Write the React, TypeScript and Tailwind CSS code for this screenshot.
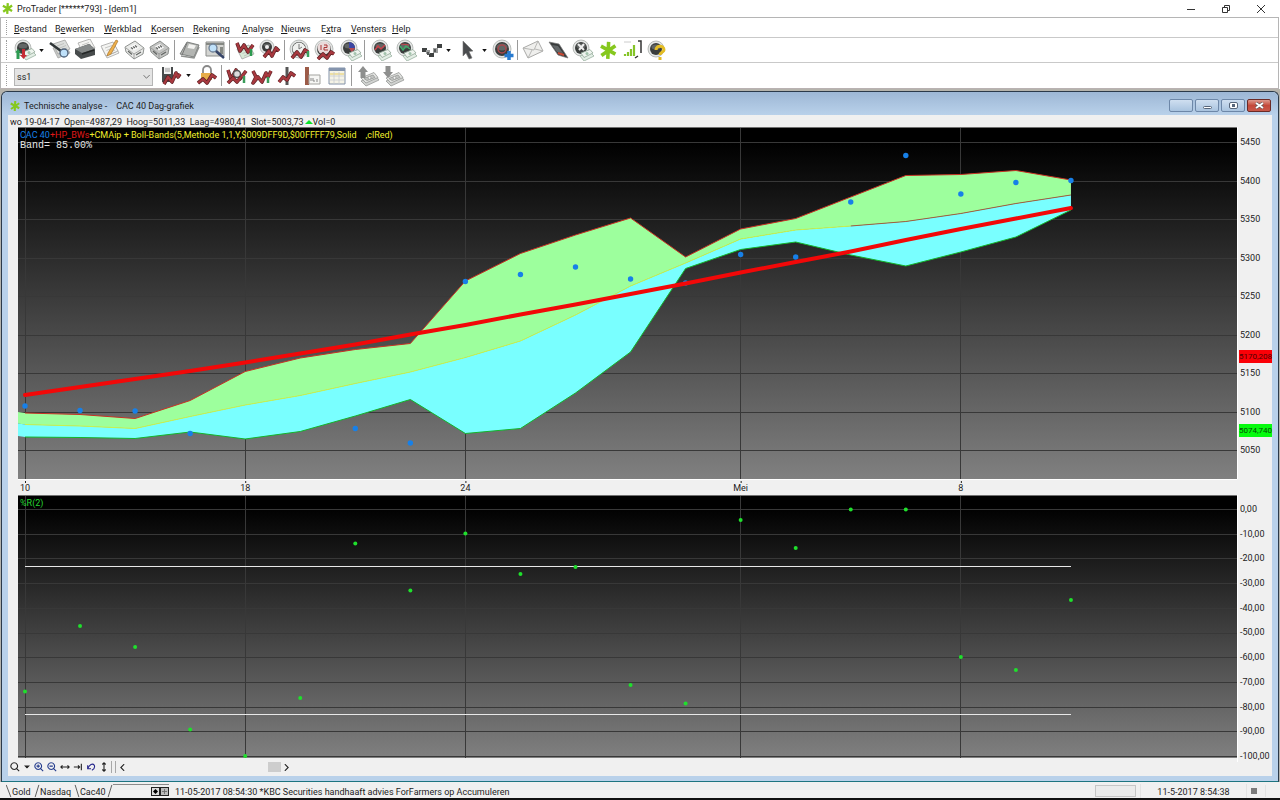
import { type ReactNode } from "react"

const STEP = 55.05
const px = (i: number) => 7 + STEP * i

const upper = [285, 286.5, 290.5, 272.5, 243.5, 230, 221.5, 215.5, 153, 125.5, 107, 90, 129, 101, 90.5, 69, 47.5, 46.5, 42.5, 52]
const middle = [296.5, 298, 300.5, 288.5, 277, 267.5, 255.5, 244, 229.5, 213, 187, 158, 135, 111, 102, 98, 93.5, 85.5, 75.5, 67]
const lower = [309, 309.5, 310.5, 304, 311, 303.5, 288, 271.5, 305.5, 300.5, 265, 224, 140.5, 121.5, 114, 127, 138, 124, 109, 82]
const average = [267, 259, 251, 243, 234.5, 225.5, 216.5, 206.5, 197, 186.5, 176.5, 166, 155.5, 144.5, 134, 123.5, 112, 101, 90.5, 80]
const closes = [278, 282.5, 283, 305.5, null, null, 300.5, 315, 153.5, 146.5, 139, 151, 155, 126.5, 129, 74, 27.5, 66, 54.5, 52.5]
const percentR = [195.5, 130, 151, 233.5, 260, 202, 47.5, 94.5, 37.5, 78, 71, 189, 207.5, 24, 52, 13.5, 13.5, 161, 174, 104]

const days = [
  { i: 0, label: "10" },
  { i: 4, label: "18" },
  { i: 8, label: "24" },
  { i: 13, label: "Mei" },
  { i: 17, label: "8" },
]

const priceScale = ["5450", "5400", "5350", "5300", "5250", "5200", "5150", "5100", "5050"]
const rScale = ["0,00", "-10,00", "-20,00", "-30,00", "-40,00", "-50,00", "-60,00", "-70,00", "-80,00", "-90,00", "-100,00"]

const line = (ys: number[], from = 0) => ys.map((y, i) => `${px(i + from)},${y}`).join(" ")
const area = (top: number[], bottom: number[]) =>
  `0,${top[0] - 1} ${line(top)} ${line(bottom).split(" ").reverse().join(" ")} 0,${bottom[0] - 1}`

const menu: [string, string, string][] = [
  ["", "B", "estand"],
  ["B", "e", "werken"],
  ["", "W", "erkblad"],
  ["", "K", "oersen"],
  ["", "R", "ekening"],
  ["", "A", "nalyse"],
  ["", "N", "ieuws"],
  ["E", "x", "tra"],
  ["", "V", "ensters"],
  ["", "H", "elp"],
]
const menuWidths = ["w-[41px]", "w-[49px]", "w-[47px]", "w-[42px]", "w-[49px]", "w-[39px]", "w-[40px]", "w-[30px]", "w-[41px]", "w-[32px]"]

// ---- icon parts, all drawn on a 24 x 22 board

const Knob = ({ x = 11, y = 10, r = 8 }) => (
  <g>
    <circle cx={x} cy={y} r={r} fill="#e4e6e5" stroke="#a9adab" strokeWidth=".8" />
    <circle cx={x} cy={y} r={r - 2} fill="#3a3d3c" />
    <ellipse cx={x} cy={y - 2} rx={r - 3.5} ry={r - 5.5} fill="#626665" />
  </g>
)
const Zig = ({ d = "M3 18L7 10L11 16L15 6L18 12L21 8" }) => (
  <g fill="none" strokeLinejoin="round">
    <path d={d} stroke="#5e2226" strokeWidth="3.6" />
    <path d={d} stroke="#a8393f" strokeWidth="2.2" />
  </g>
)
const Sheet = ({ x = 0, y = 0, fill = "#f4f4f2" }) => (
  <g transform={`translate(${x} ${y})`}>
    <path d="M2 6L14 2L19 11L7 16Z" fill={fill} stroke="#a5a5a3" strokeWidth=".8" />
    <path d="M6 8L13 5.500M7.500 10.500L15 7.500M9 13L16 10" stroke="#b9bab8" strokeWidth=".8" />
  </g>
)
const Bills = ({ x = 0, y = 0 }) => (
  <g transform={`translate(${x} ${y})`}>
    <path d="M8 15L18 11L22 15L12 20Z" fill="#e3eee5" stroke="#9bb3a1" strokeWidth=".8" />
    <path d="M9 12L18 8.500L21 12L12 16.500Z" fill="#eef4ee" stroke="#8fa696" strokeWidth=".8" />
    <circle cx="15" cy="12.500" r="1.500" fill="#a2c4ac" />
  </g>
)
const Calc = ({ fill }: { fill: string }) => (
  <g>
    <path d="M2 8L12 2L21 9L20 15L11 20L3 13Z" fill={fill} stroke="#858886" strokeWidth=".9" />
    <path d="M3 9L11 15L20 9.500M11 15V20" fill="none" stroke="#8f918f" strokeWidth=".8" />
    <path d="M7 7.500L12 5L16 8.500L11 11.500Z" fill="#fafafa" />
    <path d="M8 8.500L10 10M10 7.500L12 9M12 6.500L14 8.300M5 12L9 15.500M13 16L18 13" stroke="#616462" strokeWidth="1.200" />
  </g>
)
const Star = () => (
  <path
    d="M12.500 1L11.500 21M3.500 6L20.500 15.500M20.500 5.500L4 17"
    stroke="#86c81e"
    strokeWidth="4.200"
    fill="none"
  />
)
const Lens = ({ x = 14, y = 13 }) => (
  <g>
    <path d={`M${x + 3} ${y + 3}L${x + 7} ${y + 7}`} stroke="#303c55" strokeWidth="2.200" />
    <circle cx={x} cy={y} r="4" fill="#bfe1fa" stroke="#6d7f95" strokeWidth="1.300" />
  </g>
)
const GreyBills = () => (
  <g stroke="#979997" strokeWidth=".8">
    <path d="M5 16L19 10L23 15L10 21Z" fill="#d0d2d0" />
    <path d="M5 13L18 7.500L22 12.500L10 18Z" fill="#e2e3e1" />
    <path d="M8 13.500L17 10L19 12.500L11 15.500Z" fill="#c3c5c3" />
    <circle cx="13.500" cy="12.800" r="1.500" fill="#f2f2f2" />
  </g>
)

function Tool({ name, children }: { name: string; children: ReactNode }) {
  return (
    <button aria-label={name} className="flex w-[25px] shrink-0 items-center justify-center">
      <svg viewBox="0 0 24 22" className="h-[22px] w-[24px]">{children}</svg>
    </button>
  )
}

function Caret({ name }: { name: string }) {
  return (
    <button aria-label={name} className="flex w-[11px] shrink-0 items-center justify-center">
      <svg viewBox="0 0 6 4" className="h-[3px] w-[5px]"><path d="M0 0H6L3 4Z" fill="#111" /></svg>
    </button>
  )
}

const Sep = () => <div className="mx-[2px] my-[2px] w-px shrink-0 bg-[#9a9a9a]" />
const Grip = () => <div className="my-[2px] ml-[5px] w-px shrink-0 border-l border-dotted border-[#9d9d9d]" />

function MainToolbar() {
  return (
    <div className="flex h-[25px] border-b border-[#c9c9c9]">
      <Grip />
      <div className="ml-[4px] flex">
        <Tool name="Order"><Knob x={11} y={9} r={8} /><Bills x={2} y={1} /><path d="M6 10L9 13.500H7.500V20H4.500V13.500H3Z" fill="#2d9c52" /><path d="M10 10H13V16H15L11.500 20L8 16H10Z" fill="#c52c34" /></Tool>
        <Caret name="Order opties" />
        <Tool name="Zoeken"><Sheet x={3} y={3} fill="#c9cbc9" /><Sheet x={3} y={-1} fill="#dcdedc" /><path d="M2 4L13 12" stroke="#303638" strokeWidth="2.500" /><circle cx="16" cy="14" r="4" fill="#bfe1fa" stroke="#4d6078" strokeWidth="1.300" /></Tool>
        <Tool name="Afdrukken"><Sheet x={3} y={-2} /><path d="M2 10L16 5L22 10V16L8 20L2 15Z" fill="#474b4c" /><path d="M2 10L16 5L22 10L9 14Z" fill="#858989" /><path d="M9 15L21 11" stroke="#242727" strokeWidth="1.500" /></Tool>
        <Tool name="Notitie"><Sheet x={2} y={3} /><Sheet x={1} y={1} /><path d="M10 14L18 1L20 2L13 15L9 17Z" fill="#eeb04c" stroke="#a9762d" strokeWidth=".7" /></Tool>
        <Tool name="Calculator"><Calc fill="#e9eae8" /></Tool>
        <Tool name="Portefeuille"><Calc fill="#c4c5c3" /></Tool>
        <Sep />
        <Tool name="Boek"><path d="M2 15L9 3L21 6L16 18Z" fill="#b3b5b2" stroke="#747775" strokeWidth=".9" /><path d="M3 17L16 19L21 8" fill="none" stroke="#8e908e" strokeWidth="1.500" /><path d="M11 5L18 6.500L16 10L9.500 9Z" fill="#f2f2f0" /><path d="M9 4L4 16" stroke="#777" /></Tool>
        <Tool name="Bekijken"><path d="M3 3H21V17H3Z" fill="#d4d5d2" stroke="#8b8d8b" /><path d="M3 4H21V6H3ZM17 8H20V15H17Z" fill="#858883" /><Lens x={10} y={9} /><path d="M13 12L21 19" stroke="#38466a" strokeWidth="2.500" /></Tool>
        <Sep />
        <Tool name="Grafiek"><Sheet x={2} y={4} fill="#d8ead7" /><Zig d="M4 4L7 12L11 6L15 13L20 6" /><path d="M18 17V10" stroke="#2c9a50" strokeWidth="2.500" /></Tool>
        <Tool name="Indicator"><Knob x={9} y={8} r={7} /><circle cx="9" cy="8" r="2" fill="#eee" /><Zig d="M6 18L11 12L14 17L18 9L21 12" /></Tool>
        <Sep />
        <Tool name="Tijd"><Knob x={11} y={10} r={9} /><circle cx="11" cy="10" r="6.500" fill="#f0f1ef" /><path d="M11 5V10L14 8" stroke="#777" fill="none" /><Zig d="M4 19L9 13L13 18L17 11L20 13" /><path d="M20 18V12" stroke="#39a15d" strokeWidth="2.500" /></Tool>
        <Tool name="Dag"><Knob x={11} y={10} r={9} /><circle cx="11" cy="9" r="6.500" fill="#eadada" /><path d="M8 6V11M11 6H14V8.500H11V11H15" stroke="#a33" fill="none" /><Zig d="M5 20L10 15L14 19L18 13L21 15" /></Tool>
        <Tool name="Verdeling"><Knob x={11} y={9} r={8} /><path d="M11 9V3A6 6 0 0 1 17 9Z" fill="#3c47a4" /><path d="M11 9H17L14 14Z" fill="#b54a51" /><Bills x={2} y={2} /></Tool>
        <Sep />
        <div className="ml-px flex">
          <Tool name="Rendement"><Knob x={11} y={9} r={8} /><path d="M6 11L9 7L12 10L16 6" stroke="#c8434a" strokeWidth="1.500" fill="none" /><Bills x={1} y={2} /></Tool>
          <Tool name="Risico"><Knob x={11} y={9} r={8} /><path d="M6 7L9 11L12 7L16 10" stroke="#3fab6a" strokeWidth="1.500" fill="none" /><path d="M7 5L15 6" stroke="#c8434a" /><Bills x={1} y={2} /></Tool>
          <Tool name="Raster">
            <path d="M3 9H8V13H3ZM10 14H15V18H10ZM18 5H23V9H18Z" fill="#3f4242" />
            <path d="M7 11H11V15H7ZM14 9H19V14H14Z" fill="#9a9c9c" />
            <path d="M8 13H10V16H8ZM15 10H17V13H15Z" fill="#555858" />
          </Tool>
          <Caret name="Raster opties" />
          <Tool name="Aanwijzer"><path d="M8 2L18 12L14 12.500L17 19L14 20L11 14L8 17Z" fill="#4a4c4e" stroke="#777" strokeWidth=".6" /></Tool>
          <Caret name="Aanwijzer opties" />
          <Tool name="Toevoegen"><Knob x={11} y={10} r={9} /><circle cx="11" cy="10" r="4" fill="none" stroke="#a9474c" strokeWidth="1.500" /><path d="M18 12V21M13.500 16.500H22.500" stroke="#287bd0" strokeWidth="3.500" /></Tool>
        </div>
        <Sep />
        <Tool name="Bericht"><path d="M2 9L17 2L22 12L7 19Z" fill="#efefed" stroke="#aaaaa8" /><path d="M2 9L13 11L17 2M7 19L11 11M22 12L14 10" stroke="#b1b1af" fill="none" strokeWidth=".9" /></Tool>
        <Tool name="Scherm"><path d="M3 3L13 5L22 19L12 16Z" fill="#393c3d" stroke="#777" strokeWidth=".7" /><path d="M6 6L12 7L17 14L11 13Z" fill="#64686a" /><path d="M12 14L18 16" stroke="#c94934" strokeWidth="2" /></Tool>
        <Tool name="Instellingen"><Knob x={10} y={9} r={8} /><path d="M7 5L13 11M13 5L8 11" stroke="#eee" strokeWidth="2" /><Bills x={1} y={2} /></Tool>
        <Tool name="ProTrader"><g transform="translate(2 2) scale(.85)"><Star /></g></Tool>
        <Tool name="Signaal"><path d="M4 15V17M7 13V17M10 10V17M13 6V17" stroke="#85c428" strokeWidth="2.200" /><path d="M17 2H20V14M14 19L17 17" fill="none" stroke="#333" strokeWidth="1.500" /><path d="M3 3H10" stroke="#ccc" /></Tool>
        <Tool name="Help"><Knob x={10} y={10} r={8} /><path d="M10 11C10 6 18 6 18 11C18 13 14 13 14 16M14 18V21" fill="none" stroke="#e4bd25" strokeWidth="3" /></Tool>
      </div>
    </div>
  )
}

function ChartToolbar() {
  return (
    <div className="flex h-[26px] border-b border-[#b9b2b2]">
      <Grip />
      <div className="relative mt-[5px] ml-[7px] h-[18px] w-[139px]">
        <select aria-label="Werkset" className="h-full w-full appearance-none border border-[#b5b5b5] bg-[#e4e4e4] pl-[2px] text-[9px] leading-[14px]">
          <option>ss1</option>
        </select>
        <svg viewBox="0 0 8 5" className="pointer-events-none absolute top-[7px] right-[3px] h-[4px] w-[7px]"><path d="M0 0L4 4L8 0" fill="none" stroke="#555" /></svg>
      </div>
      <div className="ml-[5px] flex">
        <Tool name="Opslaan"><path d="M3 2H14V17H3Z" fill="#484b4c" /><path d="M5 2H12V9H5Z" fill="#f2f2f2" /><path d="M6 4H11M6 6H11" stroke="#999" /><Zig d="M5 19L9 12L13 17L17 8L19 12L21 9" /></Tool>
        <Caret name="Opslaan opties" />
        <Tool name="Vergrendelen"><path d="M8 8V5A4 4 0 0 1 16 5V8" fill="none" stroke="#888" strokeWidth="1.800" /><path d="M6 8H17V15H6Z" fill="#e7ad49" /><Zig d="M3 18L8 14L12 18L17 10L21 13" /></Tool>
        <Sep />
        <Tool name="Analyse"><Zig d="M3 5L6 14L11 5L15 14L21 6" /><circle cx="12" cy="9" r="3.500" fill="#ddd" stroke="#555" strokeWidth="1.500" /><Zig d="M3 18L8 13L12 17L16 12" /><path d="M19 18V11" stroke="#3a9c5a" strokeWidth="2.500" /></Tool>
        <Tool name="Trend"><Zig d="M3 6L6 12L3 18L8 12L12 17L16 8L18 12L21 6" /><path d="M18 18V12" stroke="#3a9c5a" strokeWidth="2.500" /></Tool>
        <Tool name="Lijn"><path d="M12 2V20" stroke="#555" strokeWidth="3" /><Zig d="M4 17L8 12L12 15L16 8L20 11" /></Tool>
        <Tool name="Label"><path d="M7 2V20" stroke="#9c5b48" strokeWidth="4" /><path d="M9 10H20V19H9Z" fill="#f6f6f4" stroke="#a3a39f" /><path d="M11 16V13M13 13V16H15M17 14V17" stroke="#888" fill="none" /></Tool>
        <Tool name="Tabel"><path d="M4 3H20V19H4Z" fill="#f5f3e6" stroke="#8392a9" /><path d="M4 3H20V6H4Z" fill="#8494ad" /><path d="M5 8H19V10H5Z" fill="#eee0a4" /><path d="M9 7V19M14 7V19M5 11H19M5 15H19" stroke="#c8cbd2" strokeWidth=".8" /></Tool>
        <Sep />
        <div className="ml-px flex">
          <Tool name="Omhoog"><GreyBills /><path d="M7 1L12 7H9.500V13H4.500V7H2Z" fill="#8e8f8e" /></Tool>
          <Tool name="Omlaag"><GreyBills /><path d="M4.500 1H9.500V7H12L7 13L2 7H4.500Z" fill="#8e8f8e" /></Tool>
        </div>
      </div>
    </div>
  )
}

function Plot({ label, height, rows, children }: { label: string; height: number; rows: number[]; children: ReactNode }) {
  return (
    <svg role="img" aria-label={label} viewBox={`0 0 1219 ${height}`} preserveAspectRatio="none" className="block h-full w-full">
      <defs>
        <linearGradient id={`bg${height}`} x1="0" y1="0" x2="0" y2="1">
          <stop offset=".04" stopColor="#000" />
          <stop offset="1" stopColor="#808080" />
        </linearGradient>
      </defs>
      <rect width="1219" height={height} fill={`url(#bg${height})`} />
      <g stroke="#383838" shapeRendering="crispEdges">
        {rows.map((y) => <path key={y} d={`M0 ${y}H1219`} />)}
        {days.map((d) => <path key={d.i} d={`M${px(d.i)} 0V${height}`} />)}
      </g>
      {children}
    </svg>
  )
}

function PriceChart() {
  return (
    <Plot label="CAC 40 koers" height={351} rows={priceScale.map((_, i) => 14.5 + i * 38.5)}>
      <polygon points={area(upper, middle)} fill="#9dff9d" />
      <polygon points={area(middle, lower)} fill="#79ffff" />
      <g fill="none">
        <polyline points={line(upper)} stroke="#c83224" />
        <polyline points={line(lower)} stroke="#12b52a" />
        <polyline points={line(middle.slice(0, 16))} stroke="#ccf24a" />
        <polyline points={line(middle.slice(15), 15)} stroke="#a3603c" />
      </g>
      {closes.map((y, i) => y !== null && <circle key={i} cx={px(i)} cy={y} r="2.700" fill="#1780e8" />)}
      <polyline points={line(average)} fill="none" stroke="#f20808" strokeWidth="4" strokeLinecap="round" />
    </Plot>
  )
}

function PercentChart() {
  return (
    <Plot label="%R(2)" height={262} rows={rScale.map((_, i) => 13.5 + i * 24.7)}>
      <path d={`M7 70.500H${px(19)}M7 218.500H${px(19)}`} stroke="#e8e8e8" shapeRendering="crispEdges" />
      {percentR.map((y, i) => <circle key={i} cx={px(i)} cy={y} r="2" fill="#1fe02c" />)}
    </Plot>
  )
}

function ChildWindow() {
  const caption = "flex h-[13px] w-[24px] items-center justify-center rounded-[2px] border border-[#6d87a8] bg-linear-to-b from-[#cfdff0] to-[#a9c3df]"
  return (
    <section className="rounded-t-md border border-[#2b3a4a] border-b-[#1d7480] bg-[#b9d1ea] px-[6px] pb-[5px]">
      <header className="-mx-[6px] flex h-[23px] items-center rounded-t-md bg-linear-to-b from-[#9db7d5] to-[#b9d1ea] pt-[4px] pr-[7px] pl-[7px]">
        <svg viewBox="0 0 24 22" className="mr-[3px] h-[12px] w-[12px]"><Star /></svg>
        <h1 className="mr-auto whitespace-pre">Technische analyse -    CAC 40 Dag-grafiek</h1>
        <div className="flex gap-[2px]">
          <button aria-label="Venster" className={caption} />
          <button aria-label="Minimaliseren" className={caption}><span className="mt-[3px] h-[3px] w-[9px] rounded-xs border border-[#56657a] bg-white" /></button>
          <button aria-label="Herstellen" className={caption}><span className="flex h-[7px] w-[9px] items-center justify-center rounded-xs border border-[#56657a] bg-white"><span className="h-[3px] w-[3px] bg-[#56657a]" /></span></button>
          <button aria-label="Sluiten" className="flex h-[13px] w-[24px] items-center justify-center rounded-[2px] border border-[#6b2a26] bg-linear-to-b from-[#dd9a8e] via-[#c4493a] to-[#c9594a]">
            <svg viewBox="0 0 9 7" className="h-[7px] w-[9px]"><path d="M1 1L8 6M8 1L1 6" stroke="#555" strokeWidth="3" /><path d="M1 1L8 6M8 1L1 6" stroke="#fff" strokeWidth="2" /></svg>
          </button>
        </div>
      </header>
      <div className="bg-[#f0f0f0] pb-[4px]">
        <p className="flex h-[12px] items-center pt-px pl-[2px] whitespace-pre">
          wo 19-04-17  Open=4987,29  Hoog=5011,33  Laag=4980,41  Slot=5003,73 
          <svg viewBox="0 0 8 4" className="ml-px h-[4px] w-[8px]"><path d="M0 4L4 0L8 4Z" fill="#0be32a" /></svg>
          Vol=0
        </p>
        <div className="flex">
          <div className="relative ml-[10px] h-[352px] min-w-0 flex-1 border-t border-[#707070]">
            <PriceChart />
            <p className="absolute top-px left-[2px] whitespace-pre text-[#f0ee2c]">
              <span className="text-[#1780e8]">CAC 40</span><span className="text-[#e01818]">+HP_BWs</span>+CMAip + Boll-Bands(5,Methode 1,1,Y,$009DFF9D,$00FFFF79,Solid    ,clRed)
            </p>
            <p className="absolute top-[12px] left-[2px] font-['Liberation_Mono',monospace] text-[10px] whitespace-pre text-[#e6e6e6]">Band= 85.00%</p>
          </div>
          <div className="relative flex w-[35px] shrink-0 flex-col justify-between border-l border-white pt-[9px] pb-[23px] pl-[2px]">
            {priceScale.map((p) => <span key={p}>{p}</span>)}
            <span className="absolute top-[223px] left-px h-[13px] w-[33px] bg-[#fb0007] text-[8px] leading-[14px] text-[#4d0003]">5170,208</span>
            <span className="absolute top-[297px] left-px h-[13px] w-[33px] bg-[#06fb0e] text-[8px] leading-[14px] text-[#034d05]">5074,740</span>
          </div>
        </div>
        <div className="mr-[35px] ml-[10px] border-t border-white">
          <svg className="block h-[15px] w-full">
            {days.map((d) => (
              <g key={d.i}>
                <rect x={`${(px(d.i) / 1219) * 100}%`} y="1" width="1" height="2" fill="#222" />
                <text x={`${(px(d.i) / 1219) * 100}%`} y="11" textAnchor="middle" fill="#222">{d.label}</text>
              </g>
            ))}
          </svg>
        </div>
        <div className="flex items-start">
          <div className="relative ml-[10px] h-[263px] min-w-0 flex-1 border-t border-[#707070]">
            <PercentChart />
            <p className="absolute top-px left-[2px] text-[#25d532]">%R(2)</p>
          </div>
          <div className="flex h-[267px] w-[35px] shrink-0 flex-col justify-between border-l border-white pt-[8px] pl-[2px]">
            {rScale.map((p) => <span key={p}>{p}</span>)}
          </div>
        </div>
        <ChartFooter />
      </div>
    </section>
  )
}

function ChartFooter() {
  return (
    <div className="flex h-[10px] items-center">
      {[
        ["Zoom", "M8 8L11 11M5 1A4 4 0 1 0 5.100 1", "#222"],
        ["Meer", "M4 5H8L6 7Z", "#222"],
        ["Inzoomen", "M8 8L11 11M5 1A4 4 0 1 0 5.100 1M3 5H7M5 3V7", "#223a8c"],
        ["Uitzoomen", "M8 8L11 11M5 1A4 4 0 1 0 5.100 1M3 5H7", "#223a8c"],
        ["Breedte", "M1 6H11M3 4L1 6L3 8M9 4L11 6L9 8", "#222"],
        ["Einde", "M1 6H8M6 4L8 6L6 8M10 2V10", "#222"],
        ["Terug", "M2 4V8H6M2 8C4 3 8 1 10 4C11 7 9 9 7 10", "#25258c"],
        ["Hoogte", "M6 1V11M4 3L6 1L8 3M4 9L6 11L8 9", "#222"],
      ].map(([name, d, color]) => (
        <button key={name} aria-label={name} className={`flex h-[10px] items-center justify-center ${name === "Meer" ? "w-[11px]" : "w-[13px]"}`}>
          <svg viewBox="0 0 12 12" className="h-[10px] w-[10px]"><path d={d} fill={name === "Meer" ? color : "none"} stroke={color} strokeWidth="1.300" /></svg>
        </button>
      ))}
      <div className="ml-px h-[12px] w-[5px] border-x border-[#a8a8a8]" />
      <button aria-label="Vorige" className="ml-[2px] flex w-[8px] justify-center"><svg viewBox="0 0 6 8" className="h-[7px] w-[5px]"><path d="M5 0L1 4L5 8" fill="none" stroke="#222" strokeWidth="1.300" /></svg></button>
      <div className="flex w-[156px] justify-end pr-px"><span className="h-[10px] w-[13px] bg-[#cdcdcd]" /></div>
      <button aria-label="Volgende" className="flex w-[8px] justify-center"><svg viewBox="0 0 6 8" className="h-[7px] w-[5px]"><path d="M1 0L5 4L1 8" fill="none" stroke="#222" strokeWidth="1.300" /></svg></button>
    </div>
  )
}

function StatusBar() {
  return (
    <footer className="flex h-[16px] items-center border-b-2 border-[#111] bg-[#f0f0f0]">
      <div className="flex h-full w-[169px] items-center">
        <svg viewBox="0 0 6 15" className="ml-[6px] h-[14px] w-[6px]"><path d="M0 1L5 14" stroke="#555" /></svg>
        <button className="w-[22px] pt-[2px] text-left whitespace-nowrap">Gold</button>
        <svg viewBox="0 0 6 15" className="h-[14px] w-[6px]"><path d="M5 1L1 14" stroke="#555" /></svg>
        <button className="w-[34px] pt-[2px] text-left whitespace-nowrap">Nasdaq</button>
        <svg viewBox="0 0 6 15" className="h-[14px] w-[6px]"><path d="M1 1L5 14" stroke="#555" /></svg>
        <button className="w-[27px] pt-[2px] text-left whitespace-nowrap">Cac40</button>
        <svg viewBox="0 0 6 15" className="h-[14px] w-[6px]"><path d="M5 1L1 14" stroke="#555" /></svg>
        <div className="flex h-full flex-1 items-center justify-end border-t border-[#8a8a8a]">
          <span className="flex h-[9px] w-[9px] items-center justify-center border border-[#222] bg-[#ddd]"><svg viewBox="0 0 6 6" className="h-[5px] w-[5px]"><path d="M3 0L6 3L3 6L0 3Z" /></svg></span>
          <span className="flex h-[9px] w-[9px] items-center justify-center border border-[#222] bg-[#bbb]"><svg viewBox="0 0 6 6" className="h-[5px] w-[5px]"><path d="M3 0V6M0 3H6" stroke="#666" /></svg></span>
        </div>
      </div>
      <p className="mr-auto pt-[2px] pl-[6px] whitespace-nowrap">11-05-2017 08:54:30 *KBC Securities handhaaft advies ForFarmers op Accumuleren</p>
      <div className="h-[12px] w-[41px] border border-[#c6c6c6] bg-[#ebebeb]" />
      <p className="ml-[4px] w-[107px] border-x border-[#e2e2e2] pt-[2px] text-center whitespace-nowrap">11-5-2017 8:54:38</p>
      <div className="mx-[4px] h-[6px] w-[6px] bg-[#7b7b7b]" />
      <div className="ml-[4px] h-[12px] w-[15px] border-l border-[#e2e2e2]" />
    </footer>
  )
}

export default function App() {
  return (
    <div className="bg-white font-[Roboto,'Open_Sans',sans-serif] text-[9px] leading-[12px] text-[#1c1c1c]">
      <div className="flex h-[17px] items-center pl-[1px]">
        <svg viewBox="0 0 24 22" className="mr-[3px] h-[13px] w-[13px]"><Star /></svg>
        <span className="mr-auto">ProTrader [******793] - [dem1]</span>
        <button aria-label="Minimaliseren" className="flex w-[35px] justify-center"><svg viewBox="0 0 8 8" className="h-[8px] w-[8px]"><path d="M0 4.500H8" stroke="#333" /></svg></button>
        <button aria-label="Verkleinen" className="flex w-[35px] justify-center"><svg viewBox="0 0 8 8" className="h-[8px] w-[8px]"><path d="M.5 2.500H5.500V7.500H.5ZM2.500 2.500V.5H7.500V5.500H5.500" fill="none" stroke="#333" /></svg></button>
        <button aria-label="Sluiten" className="mr-[2px] flex w-[35px] justify-center"><svg viewBox="0 0 8 8" className="h-[8px] w-[8px]"><path d="M0 0L8 8M8 0L0 8" stroke="#333" /></svg></button>
      </div>
      <div className="mr-px border-t border-r border-l border-[#b5b5b5]">
        <nav className="flex h-[20px] items-stretch border-b border-[#c9c9c9]">
          <Grip />
          <div className="ml-[7px] flex items-center pt-[2px]">
            {menu.map(([before, key, after], i) => (
              <button key={i} className={`${menuWidths[i]} text-left whitespace-nowrap`}>
                {before}<u className="underline-offset-1">{key}</u>{after}
              </button>
            ))}
          </div>
        </nav>
        <MainToolbar />
        <ChartToolbar />
      </div>
      <main className="bg-[#b5b3ac] px-px pt-[2px]">
        <ChildWindow />
      </main>
      <div className="h-[2px] bg-[#f0f0f0]" />
      <StatusBar />
    </div>
  )
}
